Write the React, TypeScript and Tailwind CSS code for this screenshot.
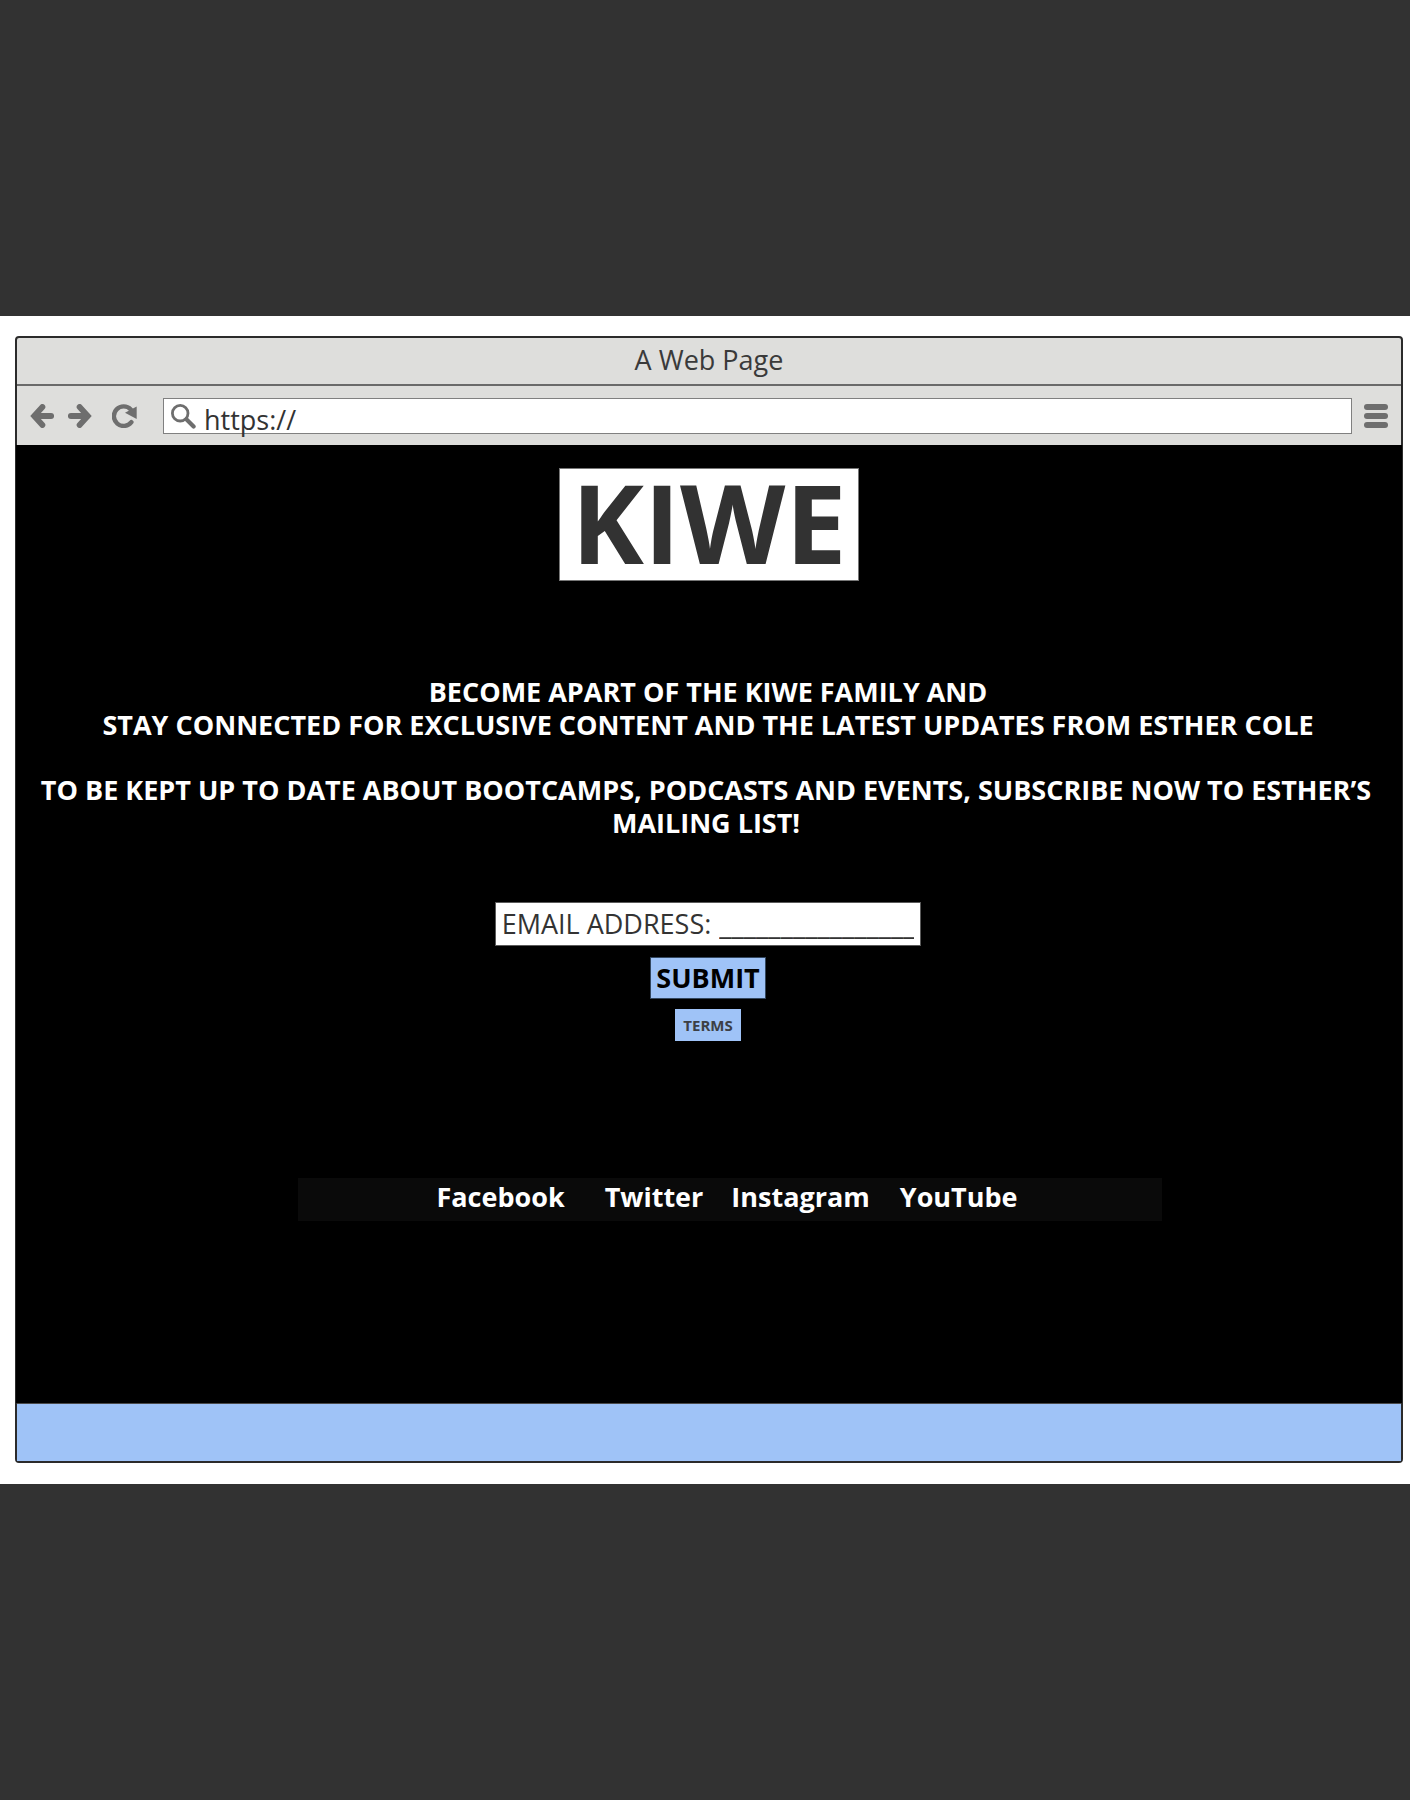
import React from "react";

const SOCIAL_LINKS = [
  { name: "Facebook", className: "mr-10" },
  { name: "Twitter", className: "mr-7" },
  { name: "Instagram", className: "mr-[30px]" },
  { name: "YouTube", className: "" },
];

const INTRO =
  "BECOME APART OF THE KIWE FAMILY AND\nSTAY CONNECTED FOR EXCLUSIVE CONTENT AND THE LATEST UPDATES FROM ESTHER COLE";

function BackIcon() {
  return (
    <svg viewBox="0 0 24 24" className="size-6" fill="none" stroke="#6e6e6e" strokeWidth="5.8" strokeLinecap="round" aria-hidden="true">
      <path d="M12.4 3 4.2 12l8.2 9" />
      <path d="M5 12h16.2" />
    </svg>
  );
}

function ForwardIcon() {
  return (
    <svg viewBox="0 0 24 24" className="size-6" fill="none" stroke="#6e6e6e" strokeWidth="5.8" strokeLinecap="round" aria-hidden="true">
      <path d="m11.6 3 8.2 9-8.2 9" />
      <path d="M19 12H2.8" />
    </svg>
  );
}

function ReloadIcon() {
  return (
    <svg viewBox="0 0 25 24" className="h-6 w-[25px]" aria-hidden="true">
      <path d="M19.4 18.2A9.8 9.8 0 1 1 18.8 5.4" fill="none" stroke="#6e6e6e" strokeWidth="4.4" strokeLinecap="round" />
      <path d="M24.7 2.4V15L13 8.8Z" fill="#6e6e6e" />
    </svg>
  );
}

function SearchIcon() {
  return (
    <svg viewBox="0 0 25 25" className="size-[25px] shrink-0" fill="none" stroke="#6e6e6e" aria-hidden="true">
      <circle cx="9.2" cy="9.2" r="7.8" strokeWidth="2.8" />
      <path d="m15.6 15.6 7 7" strokeWidth="4.2" strokeLinecap="round" />
    </svg>
  );
}

function BrowserToolbar() {
  return (
    <div className="flex h-[59px] items-center pr-[13px] pl-[13px]">
      <button type="button" aria-label="Back">
        <BackIcon />
      </button>
      <button type="button" aria-label="Forward" className="ml-[14px]">
        <ForwardIcon />
      </button>
      <button type="button" aria-label="Reload" className="ml-5">
        <ReloadIcon />
      </button>
      <div className="ml-[26px] flex h-9 flex-1 border border-[#808080] bg-white pl-[7px]">
        <span className="pt-[5px]">
          <SearchIcon />
        </span>
        <input
          type="text"
          aria-label="Address"
          defaultValue="https://"
          className="ml-2 h-[42px] min-w-0 flex-1 bg-transparent text-[27px] text-[#333333] outline-none"
        />
      </div>
      <button type="button" aria-label="Menu" className="ml-3 flex w-6 flex-col gap-[3px]">
        <span className="h-1.5 rounded-full bg-[#6e6e6e]" />
        <span className="h-1.5 rounded-full bg-[#6e6e6e]" />
        <span className="h-1.5 rounded-full bg-[#6e6e6e]" />
      </button>
    </div>
  );
}

function SignupForm() {
  return (
    <form className="mt-[63px] flex flex-col items-center pr-0.5" onSubmit={(event) => event.preventDefault()}>
      <div className="flex h-11 items-center border border-[#5a5a5a] bg-white px-1.5 text-[27px] leading-[38px] text-[#333333]">
        <label htmlFor="email" className="whitespace-nowrap">
          EMAIL ADDRESS:
        </label>
        <input
          id="email"
          type="email"
          placeholder="________________"
          className="ml-2 w-[195px] bg-transparent text-[28px] outline-none placeholder:text-[#333333]"
        />
      </div>
      <button type="submit" className="mt-[11px] flex h-[42px] items-center border border-[#33475f] bg-[#9fc3f7] px-[5px] text-[27px] font-bold text-black">
        SUBMIT
      </button>
      <a href="#terms" className="mt-[10px] flex h-8 items-center bg-[#9fc3f7] px-2 text-[15px] font-bold text-[#3c3f45]">
        TERMS
      </a>
    </form>
  );
}

export default function App() {
  return (
    <div className="flex min-h-screen flex-col justify-center bg-[#323232] font-['Open_Sans',sans-serif]">
      <div className="bg-white pt-5 pr-[7px] pb-[21px] pl-[15px]">
        <div className="rounded-[4px] border-2 border-[#2b2b2b] bg-[#dededc]">
          <header className="border-b-2 border-[#6a6a6a] pb-[3px] text-center text-[27px] leading-[43px] text-[#3a3a3a]">
            A Web Page
          </header>
          <BrowserToolbar />
          <main className="-mx-px bg-black pt-[23px] pb-[182px] text-center text-white">
            <h1 className="mx-auto h-[113px] w-[300px] border border-[#777777] bg-white text-[109px] leading-[105px] font-bold text-[#323232]">
              KIWE
            </h1>
            <div className="mt-[94px] pr-[18px] pl-4 text-[27px] leading-[33px] font-bold">
              <p className="whitespace-pre-line">{INTRO}</p>
              <p className="mt-8 pr-1">TO BE KEPT UP TO DATE ABOUT BOOTCAMPS, PODCASTS AND EVENTS, SUBSCRIBE NOW TO ESTHER’S MAILING LIST!</p>
            </div>
            <SignupForm />
            <nav aria-label="Social media" className="mt-[137px] mr-[240px] ml-[282px] flex h-[43px] items-center justify-center bg-[#0a0a0a] pr-1.5 pb-[5px] text-[27px] leading-[38px] font-bold">
              {SOCIAL_LINKS.map((link) => (
                <a key={link.name} href={"#" + link.name.toLowerCase()} className={link.className}>
                  {link.name}
                </a>
              ))}
            </nav>
          </main>
          <footer className="h-[58px] border-t border-[#4a4a4a] bg-[#9fc3f7]" />
        </div>
      </div>
    </div>
  );
}
